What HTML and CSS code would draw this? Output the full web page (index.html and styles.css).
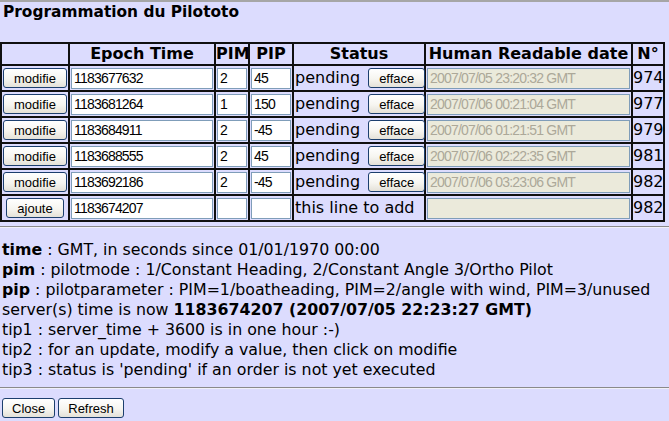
FILE: index.html
```html
<!DOCTYPE html>
<html>
<head>
<meta charset="utf-8">
<title>Programmation du Pilototo</title>
<link rel="stylesheet" href="styles.css">
</head>
<body>
<div class="title">Programmation du Pilototo</div>
<table class="grid">
<thead>
<tr>
<th class="c1"></th><th class="c2">Epoch Time</th><th class="c3">PIM</th><th class="c4">PIP</th><th class="c5">Status</th><th class="c6">Human Readable date</th><th class="c7">N°</th>
</tr>
</thead>
<tbody>
<tr>
<td class="act"><button class="btn">modifie</button></td>
<td><input class="in" value="1183677632"></td>
<td><input class="in" value="2"></td>
<td><input class="in" value="45"></td>
<td class="status">pending <button class="btn gap">efface</button></td>
<td><input class="in date" disabled value="2007/07/05 23:20:32 GMT"></td>
<td class="num">974</td>
</tr>
<tr>
<td class="act"><button class="btn">modifie</button></td>
<td><input class="in" value="1183681264"></td>
<td><input class="in" value="1"></td>
<td><input class="in" value="150"></td>
<td class="status">pending <button class="btn gap">efface</button></td>
<td><input class="in date" disabled value="2007/07/06 00:21:04 GMT"></td>
<td class="num">977</td>
</tr>
<tr>
<td class="act"><button class="btn">modifie</button></td>
<td><input class="in" value="1183684911"></td>
<td><input class="in" value="2"></td>
<td><input class="in" value="-45"></td>
<td class="status">pending <button class="btn gap">efface</button></td>
<td><input class="in date" disabled value="2007/07/06 01:21:51 GMT"></td>
<td class="num">979</td>
</tr>
<tr>
<td class="act"><button class="btn">modifie</button></td>
<td><input class="in" value="1183688555"></td>
<td><input class="in" value="2"></td>
<td><input class="in" value="45"></td>
<td class="status">pending <button class="btn gap">efface</button></td>
<td><input class="in date" disabled value="2007/07/06 02:22:35 GMT"></td>
<td class="num">981</td>
</tr>
<tr>
<td class="act"><button class="btn">modifie</button></td>
<td><input class="in" value="1183692186"></td>
<td><input class="in" value="2"></td>
<td><input class="in" value="-45"></td>
<td class="status">pending <button class="btn gap">efface</button></td>
<td><input class="in date" disabled value="2007/07/06 03:23:06 GMT"></td>
<td class="num">982</td>
</tr>
<tr>
<td class="act"><button class="btn">ajoute</button></td>
<td><input class="in" value="1183674207"></td>
<td><input class="in" value=""></td>
<td><input class="in" value=""></td>
<td class="status">this line to add</td>
<td><input class="in date" disabled value=""></td>
<td class="num">982</td>
</tr>
</tbody>
</table>
<hr class="rule rule-top">
<div class="help">
<div><b>time</b> : GMT, in seconds since 01/01/1970 00:00</div>
<div><b>pim</b> : pilotmode : 1/Constant Heading, 2/Constant Angle 3/Ortho Pilot</div>
<div><b>pip</b> : pilotparameter : PIM=1/boatheading, PIM=2/angle with wind, PIM=3/unused</div>
<div>server(s) time is now <b>1183674207 (2007/07/05 22:23:27 GMT)</b></div>
<div>tip1 : server_time + 3600 is in one hour :-)</div>
<div>tip2 : for an update, modify a value, then click on modifie</div>
<div>tip3 : status is 'pending' if an order is not yet executed</div>
</div>
<hr class="rule rule-bottom">
<div class="actions">
<button class="btn">Close</button><button class="btn">Refresh</button>
</div>
</body>
</html>
```

FILE: styles.css
```css
html, body {
  margin: 0;
  padding: 0;
  background: #dcdcfe;
}
body {
  border-top: 2px solid #a6a6a6;
  font-family: "DejaVu Sans", Verdana, sans-serif;
  font-size: 16px;
  color: #000;
  min-height: 419px;
}
.title {
  font-weight: bold;
  font-size: 15.4px;
  padding-left: 3px;
  line-height: 20px;
}
.grid {
  margin-top: 20px;
  table-layout: fixed;
  width: 665px;
  border-collapse: separate;
  border-spacing: 0;
  border: 1px solid #101010;
}
.grid th, .grid td {
  box-sizing: border-box;
  border: 1px solid #101010;
  padding: 0 1px;
  white-space: nowrap;
  overflow: visible;
}
.grid th {
  height: 22px;
  font-weight: bold;
  text-align: center;
  line-height: 18px;
  padding: 0;
}
.grid td {
  height: 26px;
  line-height: 18px;
}
.c1 { width: 68px; }
.c2 { width: 146px; }
.c3 { width: 34px; }
.c4 { width: 44px; }
.c5 { width: 132px; }
.c6 { width: 207px; }
.c7 { width: 32px; }
.act {
  text-align: center;
}
.grid td.num {
  padding: 0;
}
.in {
  box-sizing: border-box;
  display: block;
  width: 100%;
  height: 21px;
  margin: 0;
  padding: 0 2px;
  border: 1px solid #7f9db9;
  background: #fff;
  font-family: "Liberation Sans", Arial, sans-serif;
  font-size: 14px;
  letter-spacing: -0.8px;
  color: #000;
}
.in.date {
  background: #ebeadb;
  color: #aca899;
}
.btn {
  box-sizing: border-box;
  height: 20px;
  margin: 0;
  padding: 0 10px;
  border: 1px solid #1c3f6e;
  border-radius: 3px;
  background: linear-gradient(#ffffff, #f6f5f0 55%, #e4e1d8);
  font-family: "Liberation Sans", Arial, sans-serif;
  font-size: 13px;
  color: #000;
  vertical-align: middle;
}
.btn.gap {
  margin-left: 3px;
}
.rule {
  border: 0;
  height: 0;
  border-top: 1px solid #8a8a8a;
  border-bottom: 1px solid #f0f0f8;
  margin: 0;
}
.rule-top {
  margin-top: 4px;
  margin-bottom: 12px;
}
.help {
  padding-left: 2px;
  line-height: 20px;
  font-size: 15.8px;
}
.rule-bottom {
  margin-top: 7px;
  margin-bottom: 9px;
}
.actions {
  padding-left: 2px;
  display: flex;
  gap: 3px;
}
.actions .btn {
  padding: 0 9px;
}
```
